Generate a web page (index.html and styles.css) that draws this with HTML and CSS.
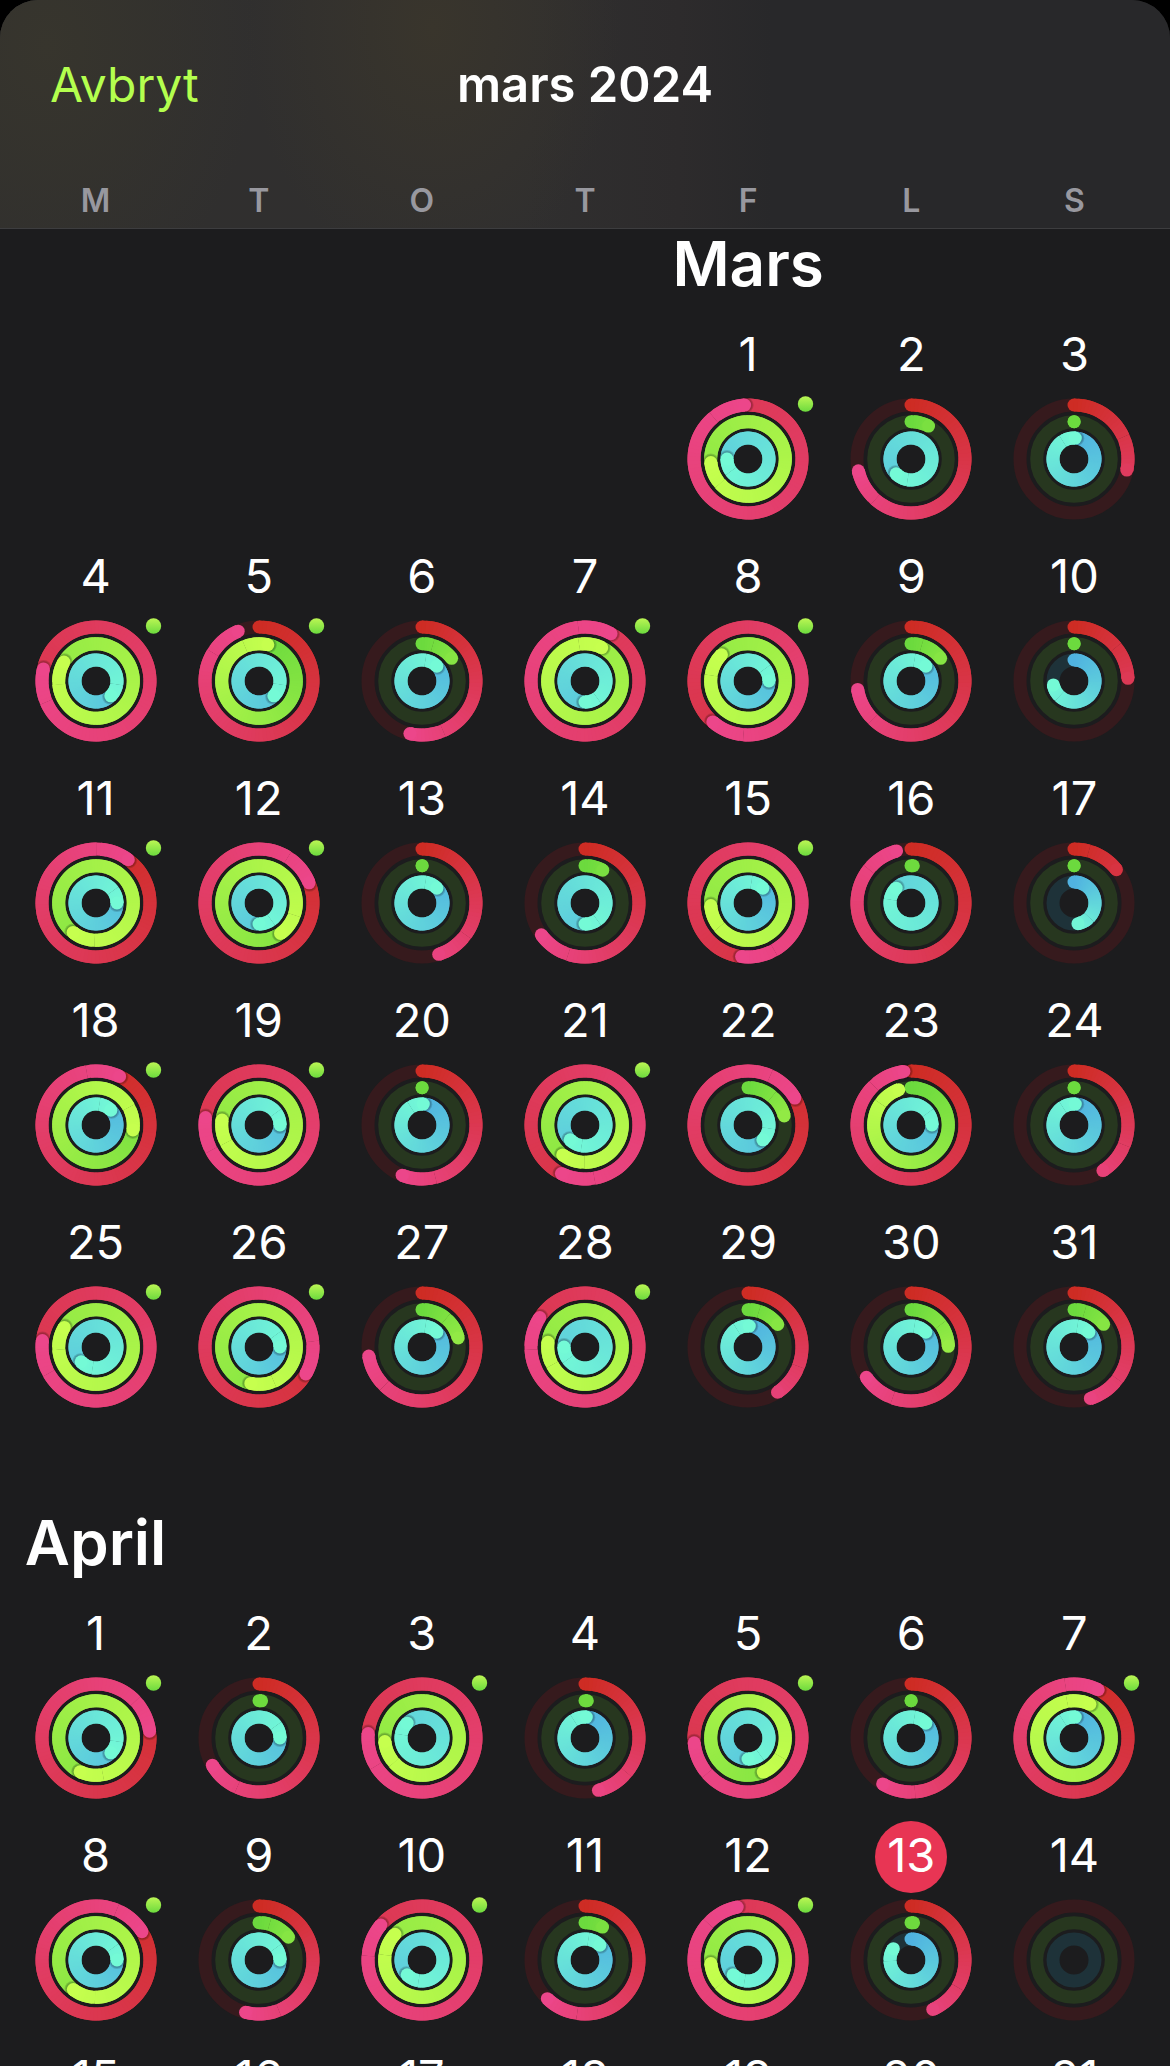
FILE: index.html
```
<!DOCTYPE html>
<html lang="sv">
<head>
    <meta charset="UTF-8">
    <meta name="viewport" content="width=device-width, initial-scale=1.0">
    <title>mars 2024</title>
    <link rel="stylesheet" href="styles.css">
</head>
<body>
    <div class="sheet">
        <header class="header">
            <div class="toolbar">
                <button type="button" class="cancel">Avbryt</button>
                <h1 class="title">mars 2024</h1>
            </div>
            <div class="weekdays">
                <span>M</span>
                <span>T</span>
                <span>O</span>
                <span>T</span>
                <span>F</span>
                <span>L</span>
                <span>S</span>
            </div>
        </header>

        <main class="calendar" id="calendar"></main>
    </div>

    <script src="script.js"></script>
</body>
</html>
```
FILE: styles.css
```
* {
    box-sizing: border-box;
}

body {
    margin: 0;
    background-color: #000;
    color: #fff;
    font-family: Inter, "Liberation Sans", sans-serif;
}

button {
    padding: 0;
    border: 0;
    background: none;
    color: inherit;
    font: inherit;
    cursor: pointer;
}

.sheet {
    display: flex;
    flex-direction: column;
    height: 100vh;
    overflow: hidden;
    background-color: #1c1c1e;
    border-radius: 38px 38px 0 0;
}

/* Header */
.header {
    flex: none;
    border-bottom: 1px solid #3d3d3f;
    background:
        radial-gradient(ellipse 16% 110% at 37% 12%, #39352c, transparent),
        radial-gradient(ellipse 18% 120% at 4% 20%, #37352d, transparent),
        linear-gradient(90deg, #302f2e, #302f2f 45%, #2d2b2c 58%, #28282a 66%);
}

.toolbar {
    display: grid;
    grid-template-columns: 1fr auto 1fr;
    align-items: center;
    padding: 53px 50px 0;
    line-height: 64px;
}

.cancel {
    justify-self: start;
    color: #b4ff4e;
    font-size: 48px;
    line-height: 64px;
}

.title {
    margin: 0;
    font-size: 49px;
    font-weight: 600;
}

.weekdays {
    display: grid;
    grid-template-columns: repeat(7, 1fr);
    padding: 64px 14px 7px;
    color: #98989f;
    font-size: 32px;
    font-weight: 600;
    line-height: 40px;
    text-align: center;
}

/* Months */
.calendar {
    flex: 1;
    min-height: 0;
    padding: 3px 14px 0;
}

.month {
    display: grid;
    grid-template-columns: repeat(7, 1fr);
    margin-bottom: 81px;
}

.month-name {
    justify-self: center;
    margin: 0 0 24px;
    font-size: 62px;
    font-weight: 600;
    line-height: 64px;
}

.day {
    display: flex;
    flex-direction: column;
    align-items: center;
    gap: 6px;
    padding-bottom: 22px;
}

.number {
    width: 72px;
    height: 72px;
    border-radius: 50%;
    font-size: 47px;
    line-height: 68px;
    text-align: center;
}

.today .number {
    background-color: #e83554;
}

/* Activity rings */
.rings {
    display: block;
    width: 122px;
    max-width: 80%;
    overflow: visible;
    fill: none;
}

.track,
.arc {
    stroke-width: 13px;
}

.shadow {
    fill: #000;
    opacity: 0.14;
}
```
FILE: script.js
```
// start / end colour of each ring, its track and its radius
const RINGS = [
    { from: [206, 44, 36], to: [236, 70, 138], track: '#361a1d', r: 54 },
    { from: [108, 218, 62], to: [198, 255, 78], track: '#27371f', r: 37.3 },
    { from: [80, 178, 224], to: [116, 250, 214], track: '#1e3239', r: 21 }
];

// each day: move, exercise, stand (1 = goal reached), workout dot
const MONTHS = [
    {
        name: 'Mars',
        firstColumn: 5,
        days: [
            [1.99, 1.735, 1.75, 1], [0.715, 0.078, 1.625], [0.283, 0.001, 1.01],
            [1.786, 1.835, 1.375, 1], [0.937, 1.038, 1.375, 1], [0.536, 0.146, 1.125], [2.08, 2.074, 1.5, 1],
            [1.613, 1.874, 1.25, 1], [0.725, 0.146, 1.125], [0.242, 0.001, 0.72],
            [1.102, 1.605, 1.25, 1], [1.189, 1.402, 1.5, 1], [0.45, 0.001, 1.125], [0.65, 0.079, 1.5],
            [1.519, 1.739, 1.125, 1], [0.957, 0.01, 1.875], [0.144, 0.001, 0.47],
            [1.072, 1.271, 1.125, 1], [1.772, 1.771, 1.25, 1], [0.56, 0.001, 1.01], [1.572, 1.602, 1.625, 1],
            [1.167, 0.211, 1.375], [0.979, 0.947, 1.25], [0.41, 0.001, 1.01],
            [1.769, 1.838, 1.625, 1], [1.333, 1.535, 1.25, 1], [0.723, 0.211, 1.125], [1.842, 1.77, 1.75, 1],
            [0.408, 0.147, 1.01], [0.655, 0.247, 1.125], [0.451, 0.146, 1.125]
        ]
    },
    {
        name: 'April',
        firstColumn: 1,
        today: 13,
        days: [
            [1.23, 1.57, 1.375, 1], [0.666, 0.011, 1.25], [1.763, 1.735, 1.875, 1], [0.46, 0.01, 1.01],
            [1.736, 1.433, 1.5, 1], [0.588, 0.001, 1.125], [1.074, 2.07, 1.01, 1],
            [1.162, 1.604, 1.25, 1], [0.54, 0.145, 1.25], [1.862, 1.871, 1.625, 1], [0.623, 0.078, 1.125],
            [1.968, 1.735, 1.625, 1], [0.434, 0.011, 0.841], [0, 0, 0],
            [0, 0, 0], [0, 0, 0], [0, 0, 0], [0, 0, 0], [0, 0, 0], [0, 0, 0], [0, 0, 0]
        ]
    }
];

const CENTER = 61;
const STEP = 1 / 90;

function point(r, turn) {
    const a = turn * 2 * Math.PI;
    return [(CENTER + r * Math.sin(a)).toFixed(2), (CENTER - r * Math.cos(a)).toFixed(2)];
}

function mix(ring, t) {
    return 'rgb(' + ring.from.map((c, i) => Math.round(c + (ring.to[i] - c) * t)).join(',') + ')';
}

function cap(ring, turn, color) {
    const [x, y] = point(ring.r, turn);
    return `<circle cx="${x}" cy="${y}" r="6.5" fill="${color}"/>`;
}

function arcs(ring, from, to, full) {
    let out = '';
    for (let t = from; t < to; t += STEP) {
        // overlap so no seam shows between two pieces
        const [x1, y1] = point(ring.r, t);
        const [x2, y2] = point(ring.r, Math.min(t + STEP * 2, to));
        out += `<path class="arc" stroke="${mix(ring, t / full)}" d="M${x1} ${y1}A${ring.r} ${ring.r} 0 0 1 ${x2} ${y2}"/>`;
    }
    return out;
}

function drawRing(ring, value) {
    let out = `<circle class="track" cx="${CENTER}" cy="${CENTER}" r="${ring.r}" stroke="${ring.track}"/>`;
    if (!value) return out;

    // under half a turn the end colour is not reached
    const full = Math.max(value, 0.5);
    const start = Math.max(0, value - 1);
    const neck = Math.max(start, value - 0.1);
    if (value < 1) out += cap(ring, 0, mix(ring, 0));
    out += arcs(ring, start, neck, full);

    // the head throws a shadow on the ring when it gets round to the start
    if (value > 0.97) {
        const [x, y] = point(ring.r, value + 1 / (2 * Math.PI * ring.r));
        out += `<circle class="shadow" cx="${x}" cy="${y}" r="8"/><circle class="shadow" cx="${x}" cy="${y}" r="7"/>`;
    }
    out += arcs(ring, neck, value, full);
    return out + cap(ring, value, mix(ring, value / full));
}

function drawDay(month, values, index) {
    const number = index + 1;
    const column = index === 0 ? ` style="grid-column-start: ${month.firstColumn}"` : '';
    const dot = values[3] ? '<circle cx="118.5" cy="6" r="7.7" fill="url(#dot)"/>' : '';
    return `<button type="button" class="day${number === month.today ? ' today' : ''}"${column}>
        <span class="number">${number}</span>
        <svg class="rings" viewBox="0 0 122 122" aria-hidden="true">${RINGS.map((ring, i) => drawRing(ring, values[i])).join('')}${dot}</svg>
    </button>`;
}

const dotGradient = `<svg width="0" height="0" style="position: absolute" aria-hidden="true">
    <linearGradient id="dot" x1="0" y1="0" x2="0" y2="1">
        <stop offset="0" stop-color="#bbf654"/>
        <stop offset="1" stop-color="#6cda3e"/>
    </linearGradient>
</svg>`;

document.getElementById('calendar').innerHTML = dotGradient + MONTHS.map(month => `
    <section class="month">
        <h2 class="month-name" style="grid-column: ${month.firstColumn}">${month.name}</h2>
        ${month.days.map((values, i) => drawDay(month, values, i)).join('')}
    </section>`).join('');
```
